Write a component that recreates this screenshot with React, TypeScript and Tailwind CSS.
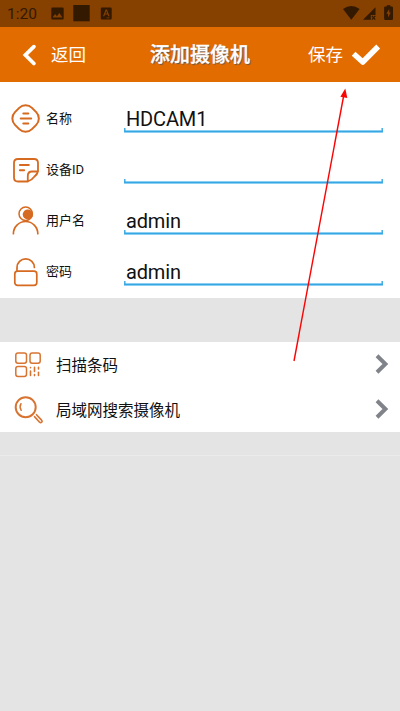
import type { ReactNode } from "react";

function StatusBar() {
    return (
        <div className="flex h-[27px] items-center bg-[#864000] pl-[7px] text-[#331900]">
            <span className="w-[44px] pt-px text-[15.5px] leading-[27px]">1:20</span>
            <svg width="62" height="27" viewBox="51 0 62 27" fill="currentColor">
                <path fillRule="evenodd" d="M52.5 7.5h10q1.2 0 1.2 1.2v9.6q0 1.2-1.2 1.2h-10q-1.2 0-1.2-1.2v-9.6q0-1.2 1.2-1.2zM52.5 17.5h10l-3.2-4.5-2.4 3.2-1.8-2.1z" />
                <path d="M73.3 5h16.4v16.3H73.3z" />
                <path fillRule="evenodd" d="M102 7.5h8.5q1.2 0 1.2 1.2v9.6q0 1.2-1.2 1.2h-8.5q-1.2 0-1.2-1.2v-9.6q0-1.2 1.2-1.2zM103 16.2h1.3l.7-1.7h2.6l.7 1.7h1.3l-2.7-6.6h-1.2zM105.4 13.400h1.8l-.9-2.400zM106.500 17.500h3v.8h-3z" />
            </svg>
            <svg className="ml-auto" width="60" height="27" viewBox="340 0 60 27" fill="currentColor">
                <path d="M343 9q8.300-5.800 16.600 0l-8.300 10.800z" />
                <path d="M363 19.800L375.500 7.200v7.800h-4.700v4.800z" />
                <path d="M371.900 15.900l3.400 3.700m0-3.700l-3.400 3.700" stroke="currentColor" strokeWidth="1.200" />
                <path fillRule="evenodd" d="M385.300 6.600h1.500V5.300h3.600v1.300h1.400q1.200 0 1.200 1.200V18.700q0 1.200-1.200 1.200h-6.500q-1.200 0-1.200-1.200V7.800q0-1.200 1.200-1.200zM389.200 9l-2.900 4.800h1.700v3.700l2.700-5h-1.500z" />
            </svg>
        </div>
    );
}

function Header() {
    return (
        <div className="flex h-[55px] items-center bg-[#e36c00] text-white">
            <svg className="ml-[20px]" width="20" height="24" viewBox="20 42 20 24" fill="none" stroke="white" strokeWidth="3.800" strokeLinecap="round">
                <path d="M33.900 45.700L25.400 54l8.500 8.500" />
            </svg>
            <span className="ml-[11px] w-[99px] text-[17.500px] leading-[26px]">返回</span>
            <span className="w-[158px] text-[20px] font-medium leading-[28px] [-webkit-text-stroke:0.3px_white] [text-shadow:1px_1px_1px_#555]">添加摄像机</span>
            <span className="text-[17.500px] leading-[26px]">保存</span>
            <svg className="ml-[7px]" width="32" height="24" viewBox="350 42 32 24" fill="none" stroke="white" strokeWidth="5.500" strokeLinejoin="round">
                <path d="M353.600 52.800l9.200 8.200L378.200 45.500" />
            </svg>
        </div>
    );
}

function Field({ label, value, icon }: { label: string; value: string; icon: ReactNode }) {
    return (
        <div className="flex h-[51px] items-center pl-[10px]">
            <svg className="mt-px" width="32" height="32" viewBox="0 0 32 32" fill="none" stroke="#d66a20" strokeWidth="2" strokeLinecap="round" strokeLinejoin="round">
                {icon}
            </svg>
            <span className="ml-[4px] mt-px w-[78px] text-[13px] leading-[20px] text-[#111]">{label}</span>
            <div className="relative mt-[1px] h-[26px] w-[259px] pl-[2px] text-[20px] leading-[26px] tracking-[-0.15px] text-[#111]">
                {value}
                <svg className="absolute left-0 top-[21px]" width="259" height="7" viewBox="0 0 259 7" fill="none">
                    <path d="M0 4.500h259" stroke="#a9dcf7" strokeWidth="3" />
                    <path d="M.8 1v3.500h257.400V1" stroke="#36a7e2" strokeWidth="1.400" />
                </svg>
            </div>
        </div>
    );
}

function Row({ label, icon }: { label: string; icon: ReactNode }) {
    return (
        <div className="flex h-[45px] items-center bg-white pl-[12px] pr-[11px]">
            <svg className="mt-px" width="32" height="32" viewBox="0 0 32 32" fill="none" stroke="#d87432" strokeWidth="1.500" strokeLinecap="round" strokeLinejoin="round">
                {icon}
            </svg>
            <span className="ml-[12px] mt-[2px] text-[15.500px] leading-[24px] text-[#111]">{label}</span>
            <svg className="-mt-px ml-auto" width="14" height="22" viewBox="0 0 14 22" fill="none" stroke="#80848a" strokeWidth="4">
                <path d="M2 2.800L10.400 11l-8.400 8.200" />
            </svg>
        </div>
    );
}

function App() {
    return (
        <div className="relative h-[711px] w-[400px] overflow-hidden bg-[#e4e4e4] font-['Roboto','Noto_Sans_CJK_SC',sans-serif]">
            <StatusBar />
            <Header />
            <div className="h-[216px] bg-white pt-[11px]">
                <Field label="名称" value="HDCAM1" icon={
                    <>
                        <rect x="3.600" y="3.500" width="24" height="24" rx="9" transform="rotate(45 15.600 15.500)" />
                        <path d="M13.300 10.500h5M10.700 15.500h10.500M13.300 20.500h5" />
                    </>
                } />
                <Field label="设备ID" value="" icon={
                    <>
                        <path d="M17.800 27.500H8Q4 27.500 4 23.500V9Q4 5 8 5h16Q28 5 28 9v8.500Q27.500 20 24.500 22.500Q21.500 26.500 17.800 27.500V22Q17.800 17.500 22 17.500h6" strokeWidth="1.800" />
                        <path d="M9.900 11h8.900M9.900 16.200h4.200" />
                    </>
                } />
                <Field label="用户名" value="admin" icon={
                    <>
                        <circle cx="15.700" cy="8.700" r="6.700" strokeWidth="1.500" />
                        <circle cx="17.800" cy="9.500" r="5.100" fill="#d66a20" stroke="none" />
                        <path d="M3.400 28.700A12.200 12.200 0 0 1 27.800 28.700" strokeWidth="1.700" />
                    </>
                } />
                <Field label="密码" value="admin" icon={
                    <>
                        <rect x="4.800" y="15.200" width="22" height="14.200" rx="2.800" strokeWidth="1.700" />
                        <path d="M7 15V11.500A8.700 8.700 0 0 1 24.400 11.500" strokeWidth="1.700" />
                    </>
                } />
            </div>
            <div className="mt-[44px]">
                <Row label="扫描条码" icon={
                    <>
                        <rect x="3.800" y="4" width="10.700" height="10.200" rx="2.200" />
                        <rect x="18" y="4" width="10.200" height="10.200" rx="2.200" />
                        <rect x="3.800" y="17.600" width="10.700" height="9.800" rx="2.200" />
                        <path d="M18.500 18.600v.2M18.500 22v4.500M22.500 18.400v4M22.500 25.600v1M26.500 18.400v1.600M26.500 23.300v3.200" strokeWidth="1.600" />
                    </>
                } />
                <div className="border-t border-[#f7f7f7] bg-white">
                    <div className="-mt-px">
                        <Row label="局域网搜索摄像机" icon={
                            <>
                                <circle cx="13.700" cy="13.200" r="10" strokeWidth="2" />
                                <path d="M9 9.700q-1.900 3.300.2 6.600" />
                                <path d="M22.500 22.600l5.100 5.600q1.100 1 2.100 0 1-1-.1-2.100l-5.100-5.400" strokeWidth="1.600" />
                            </>
                        } />
                    </div>
                </div>
            </div>
            <div className="h-[24px] border-b border-[#ebebeb]" />
            {/* pointer towards the save button */}
            <svg className="pointer-events-none absolute left-[285px] top-[82px]" width="70" height="285" viewBox="285 82 70 285">
                <path d="M294 361L344 94" stroke="#fa0505" strokeWidth="1.400" />
                <path d="M345.300 88.500l2 9.500-6.900-1.200z" fill="#fa0505" />
            </svg>
        </div>
    );
}

export default App;
